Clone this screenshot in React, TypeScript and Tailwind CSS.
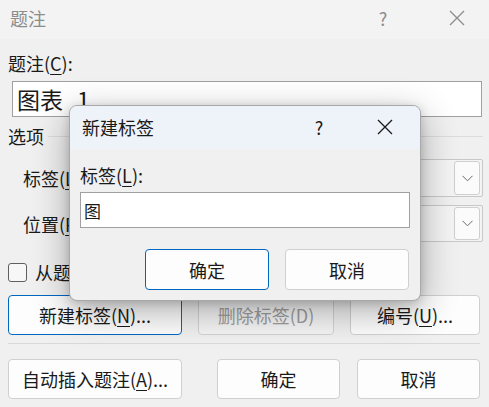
import React from "react";

const FONT = "font-[family-name:'Noto_Sans_CJK_SC','Noto_Sans',sans-serif]";

function CloseIcon({ color = "#8c8c8c" }: { color?: string }) {
  return (
    <svg width="16" height="16" viewBox="0 0 16 16" fill="none">
      <path d="M1 1L15 15M15 1L1 15" stroke={color} strokeWidth="1.3" />
    </svg>
  );
}

function Chevron() {
  return (
    <svg width="11" height="7" viewBox="0 0 11 7" fill="none">
      <path d="M0.5 0.8L5.5 5.8L10.5 0.8" stroke="#6a6a6a" strokeWidth="1" />
    </svg>
  );
}

function Btn({
  children,
  w,
  variant = "normal",
}: {
  children: React.ReactNode;
  w: string;
  variant?: "normal" | "focus" | "disabled";
}) {
  const cls =
    variant === "focus"
      ? "border-[#0067c0] bg-[#fdfdfd] text-[#1a1a1a]"
      : variant === "disabled"
      ? "border-[#d2d2d2] bg-[#f5f5f5] text-[#9d9d9d]"
      : "border-[#d0d0d0] bg-[#fdfdfd] text-[#1a1a1a]";
  return (
    <div
      className={`${w} h-full flex items-center justify-center rounded-[4px] border text-[18px] leading-none ${cls}`}
    >
      {children}
    </div>
  );
}

export default function App() {
  return (
    <div
      className={`relative w-[489px] h-[407px] overflow-hidden bg-[#f0f0f0] text-[#1a1a1a] ${FONT}`}
    >
      {/* Title bar */}
      <div className="h-[39px] bg-[#f3f3f3] flex items-center">
        <div className="pl-[10px] text-[18px] leading-none text-[#8c8c8c] -mt-[3px]">题注</div>
        <div className="ml-auto w-[20px] text-center text-[18px] leading-none text-[#8c8c8c] -mt-[3px] mr-[56px]">?</div>
        <div className="mr-[24px] -mt-[3px]">
          <CloseIcon />
        </div>
      </div>

      {/* Body */}
      <div className="px-[8px]">
        <div className="pt-[12px] text-[18px] leading-[24px]">
          题注(<span className="underline underline-offset-[3px]">C</span>):
        </div>
        <div className="mt-[6px] ml-[4px] w-[470px] h-[36px] bg-white border border-[#a0a0a0] flex items-center pl-[4px] text-[23px] leading-none">
          图表<span className="ml-[14px]">1</span>
        </div>
        <div className="mt-[7px] flex items-center">
          <span className="text-[18px] leading-[24px]">选项</span>
          <div className="ml-[4px] flex-1 h-px bg-[#dcdcdc] mr-[-2px]" />
        </div>

        <div className="mt-[11px] h-[38px] flex items-center">
          <span className="pl-[15px] w-[92px] shrink-0 whitespace-nowrap text-[18px] leading-none">
            标签(<span className="underline underline-offset-[3px]">L</span>):
          </span>
          <div className="flex-1 h-full border border-[#c8c8c8] bg-[#f4f4f4] rounded-[2px] flex items-center justify-end pr-[2px] mr-[-2px]">
            <div className="w-[26px] h-[34px] border border-[#cfcfcf] bg-[#fbfbfb] rounded-[3px] flex items-center justify-center">
              <Chevron />
            </div>
          </div>
        </div>

        <div className="mt-[8px] h-[37px] flex items-center">
          <span className="pl-[15px] w-[92px] shrink-0 whitespace-nowrap text-[18px] leading-none">
            位置(<span className="underline underline-offset-[3px]">P</span>):
          </span>
          <div className="flex-1 h-full border border-[#c8c8c8] bg-[#f4f4f4] rounded-[2px] flex items-center justify-end pr-[2px] mr-[-2px]">
            <div className="w-[26px] h-[33px] border border-[#cfcfcf] bg-[#fbfbfb] rounded-[3px] flex items-center justify-center">
              <Chevron />
            </div>
          </div>
        </div>

        <div className="mt-[20px] h-[20px] flex items-center">
          <div className="w-[19px] h-[19px] shrink-0 rounded-[3px] border border-[#5f5f5f] bg-[#f7f7f7]" />
          <span className="ml-[8px] whitespace-nowrap text-[18px] leading-none">从题注中排除标签(E)</span>
        </div>

        <div className="mt-[13px] h-[40px] flex gap-[16px]">
          <Btn w="w-[174px]" variant="focus">
            新建标签(<span className="underline underline-offset-[3px]">N</span>)...
          </Btn>
          <Btn w="w-[136px]" variant="disabled">
            删除标签(D)
          </Btn>
          <Btn w="w-[130px]">
            编号(<span className="underline underline-offset-[3px]">U</span>)...
          </Btn>
        </div>

        <div className="mt-[8px] h-px bg-[#d9d9d9] w-[472px]" />

        <div className="mt-[15px] h-[40px] flex">
          <Btn w="w-[174px]">
            自动插入题注(<span className="underline underline-offset-[3px]">A</span>)...
          </Btn>
          <div className="ml-[35px]">
            <Btn w="w-[123px]">确定</Btn>
          </div>
          <div className="ml-[17px]">
            <Btn w="w-[123px]">取消</Btn>
          </div>
        </div>
      </div>

      {/* Inner dialog (overlay) */}
      <div className="absolute left-[69px] top-[105px] w-[352px] h-[196px] rounded-[8px] border border-[#a8a8a8] bg-[#f0f0f0] overflow-hidden shadow-[0_10px_36px_rgba(0,0,0,0.32),0_2px_10px_rgba(0,0,0,0.16)]">
        <div className="h-[43px] bg-[#eef2f9] flex items-center">
          <div className="pl-[12px] text-[18px] leading-none text-[#1a1a1a] -mt-[2px]">新建标签</div>
          <div className="ml-auto w-[20px] text-center text-[18px] leading-none text-[#1a1a1a] -mt-[2px] mr-[48px]">?</div>
          <div className="mr-[27px] -mt-[2px]">
            <CloseIcon color="#1a1a1a" />
          </div>
        </div>
        <div className="px-[10px]">
          <div className="pt-[14px] text-[18px] leading-[24px]">
            标签(<span className="underline underline-offset-[3px]">L</span>):
          </div>
          <div className="mt-[5px] w-[330px] h-[36px] bg-white border border-[#a0a0a0] flex items-center pl-[3px] text-[17px] leading-none">
            图
          </div>
          <div className="mt-[21px] h-[41px] flex justify-end gap-[16px] pr-[1px]">
            <Btn w="w-[124px]" variant="focus">确定</Btn>
            <Btn w="w-[124px]">取消</Btn>
          </div>
        </div>
      </div>
    </div>
  );
}
